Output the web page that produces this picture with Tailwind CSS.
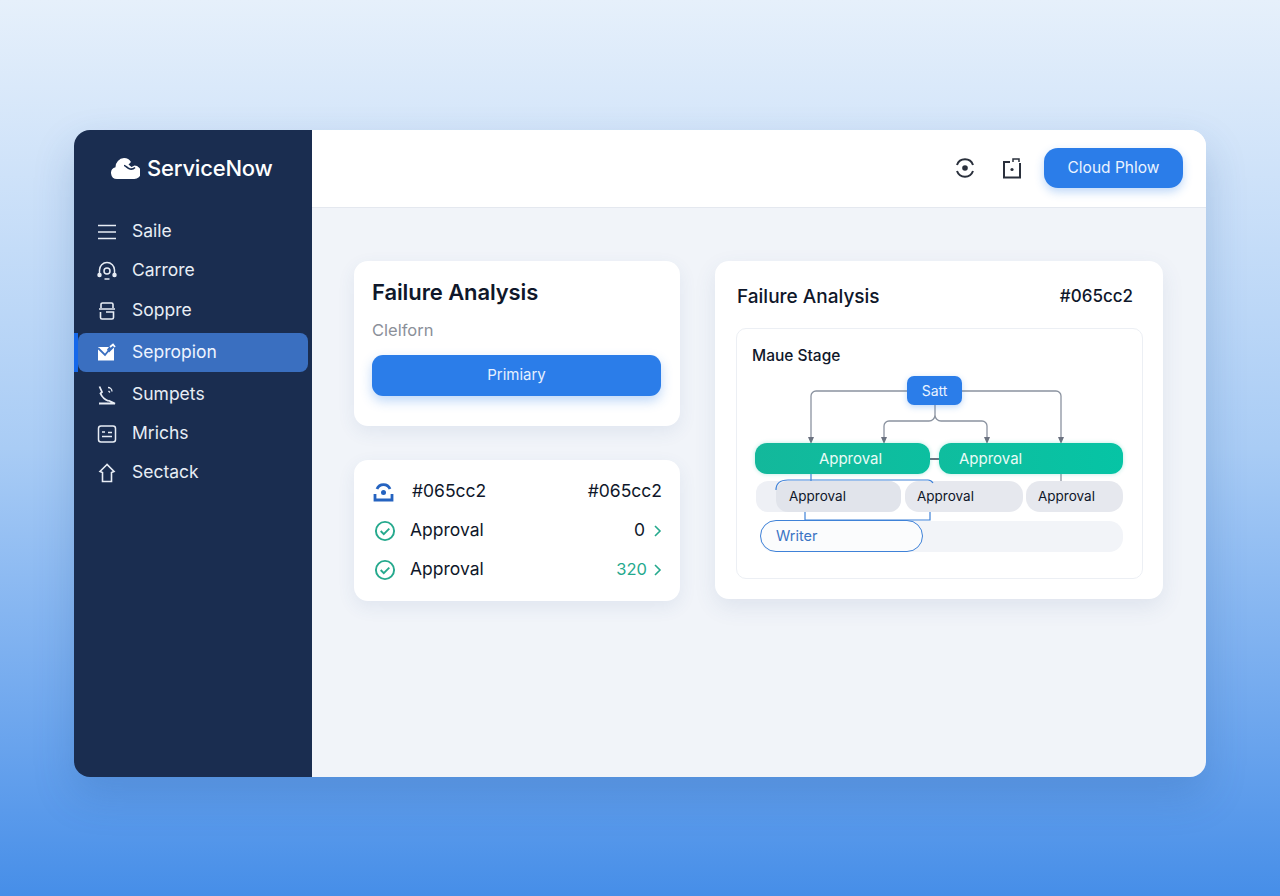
<!DOCTYPE html>
<html lang="en">

<head>
  <meta charset="UTF-8" />
  <meta name="viewport" content="width=device-width, initial-scale=1.0" />
  <title>ServiceNow</title>
  <script src="https://cdn.jsdelivr.net/npm/@tailwindcss/browser@4"></script>
</head>

<body class="h-[896px] overflow-hidden bg-gradient-to-b from-[#e6f0fb] via-[#a9ccf5] to-[#468ee8] pt-[130px] pl-[74px] font-['Inter',sans-serif] text-[#0f172a]">
  <div class="flex h-[647px] w-[1132px] overflow-hidden rounded-[16px] shadow-[0_18px_40px_rgba(30,80,150,0.22)]">

    <!-- Sidebar -->
    <aside class="w-[238px] shrink-0 bg-[#1a2d50] text-[#e8edf5]">
      <div class="flex h-[76px] items-center gap-[7px] pl-[36px]">
        <svg width="30" height="24" viewBox="0 0 30 24" fill="#fff">
          <path d="M7 23a6 6 0 0 1-1.500-11.800A9 9 0 0 1 14 2a8 8 0 0 1 7 4l-2.500 2.500 3 2.500 3-1.500A6 6 0 0 1 24 23z" />
          <path d="M14 9.500c2 0 3 3 6 3.500s4-.5 5-1.500" fill="none" stroke="#1a2d50" stroke-width="1.600" />
        </svg>
        <span class="text-[22px] font-medium tracking-[-0.2px] text-white">ServiceNow</span>
      </div>

      <nav class="mt-[6px] text-[17.500px]">
        <a class="flex h-[39px] items-center gap-[15px] pl-[23px]">
          <svg width="20" height="20" viewBox="0 0 20 20" fill="none" stroke="currentColor" stroke-width="1.600"><path d="M1 3.500h18M1 10h18M1 16.500h18" /></svg>
          <span>Saile</span>
        </a>
        <a class="flex h-[39px] items-center gap-[15px] pl-[23px]">
          <svg width="20" height="20" viewBox="0 0 20 20" fill="none" stroke="currentColor" stroke-width="1.500"><path d="M2.500 13V9a7.500 7.500 0 0 1 15 0v4" /><circle cx="10" cy="10" r="3" /><circle cx="2.500" cy="14" r="1.500" fill="currentColor" /><circle cx="17.500" cy="14" r="1.500" fill="currentColor" /><path d="M7.500 18h5" /></svg>
          <span>Carrore</span>
        </a>
        <a class="mt-[1px] flex h-[39px] items-center gap-[15px] pl-[23px]">
          <svg width="20" height="20" viewBox="0 0 20 20" fill="none" stroke="currentColor" stroke-width="1.600"><path d="M4 7V3.500a1.500 1.500 0 0 1 1.500-1.500h9A1.500 1.500 0 0 1 16 3.500V7M2 8h16M3.500 11v5.500A1.500 1.500 0 0 0 5 18h10a1.500 1.500 0 0 0 1.500-1.500V11H9" /></svg>
          <span>Soppre</span>
        </a>
        <a class="relative mt-[3px] ml-[4px] flex h-[39px] w-[230px] items-center gap-[15px] rounded-[8px] bg-[#3a6fc0] pl-[19px] text-[#eef4ff]">
          <span class="absolute top-0 -left-[4px] h-[39px] w-[4px] bg-[#1668ea]"></span>
          <svg width="20" height="20" viewBox="0 0 20 20"><path d="M1 4h11l-2 2.500 2 3 5-5v13H1z" fill="#fff" /><path d="M1 5l7 7 8-10" fill="none" stroke="#3a6fc0" stroke-width="1.800" /><path d="M13 4l3-2.500 2 2.500" fill="none" stroke="#fff" stroke-width="1.800" /></svg>
          <span>Sepropion</span>
        </a>
        <a class="mt-[3px] flex h-[39px] items-center gap-[15px] pl-[23px]">
          <svg width="20" height="20" viewBox="0 0 20 20" fill="none" stroke="currentColor" stroke-width="1.800"><path d="M2.500 1.500L5 7l-1.500 1.500c1.500 3.500 4 6 8 7.500M2 18.500h16l-6.500-3" /><path d="M11 2.500a4 4 0 0 1 4 4M11.500 6l1.500 1.500" stroke-width="1.300" /></svg>
          <span>Sumpets</span>
        </a>
        <a class="flex h-[39px] items-center gap-[15px] pl-[23px]">
          <svg width="20" height="20" viewBox="0 0 20 20" fill="none" stroke="currentColor" stroke-width="1.500"><rect x="1.500" y="2" width="17" height="16" rx="2.500" /><path d="M5 8h3M5 12.500h10M11 8.500h4" /></svg>
          <span>Mrichs</span>
        </a>
        <a class="flex h-[39px] items-center gap-[15px] pl-[23px]">
          <svg width="20" height="20" viewBox="0 0 20 20" fill="none" stroke="currentColor" stroke-width="1.600"><path d="M10 1.500L3 8.500l2.500 1V18.500h9V9.500l2.500-1z" /></svg>
          <span>Sectack</span>
        </a>
      </nav>
    </aside>

    <div class="flex min-w-0 flex-1 flex-col bg-[#f1f4f9]">
      <!-- Top bar -->
      <header class="flex h-[78px] shrink-0 items-center justify-end border-b border-[#e4e8ef] bg-white pr-[23px] pb-[2px]">
        <svg class="mr-[25px] ml-[2px]" width="22" height="22" viewBox="0 0 22 22" fill="none" stroke="#2a303c" stroke-width="2"><path d="M3 8a8.500 8.500 0 0 1 16 0M3 14a8.500 8.500 0 0 0 16 0" /><circle cx="11" cy="11" r="2.800" fill="#2a303c" stroke="none" /></svg>
        <svg class="mr-[21px]" width="22" height="22" viewBox="0 0 22 22" fill="none" stroke="#2a303c" stroke-width="2"><path d="M9 5H3v15.500h16V6" /><path d="M12 5V2h6v3" stroke-width="1.500" /><circle cx="11" cy="12.500" r="1.600" fill="#2a303c" stroke="none" /></svg>
        <button class="h-[40px] w-[139px] rounded-[14px] bg-[#2b7de9] text-[15.500px] text-[#eaf3ff] shadow-[0_4px_10px_rgba(43,125,233,0.3)]">Cloud Phlow</button>
      </header>

      <main class="flex items-start gap-[35px] pt-[53px] pl-[42px]">
        <div class="flex w-[326px] shrink-0 flex-col gap-[34px]">
          <!-- Failure analysis card -->
          <section class="h-[165px] rounded-[14px] bg-white px-[18px] pt-[16px] shadow-[0_6px_18px_rgba(60,90,140,0.09)]">
            <h2 class="text-[22px] leading-[30px] font-semibold tracking-[-0.1px]">Failure Analysis</h2>
            <p class="mt-[11px] text-[16.500px] leading-[24px] text-[#8b9099]">Clelforn</p>
            <button class="mt-[13px] h-[41px] w-[289px] rounded-[11px] bg-[#2b7de9] text-[15px] text-[#e6f0ff] shadow-[0_5px_12px_rgba(43,125,233,0.3)]">Primiary</button>
          </section>

          <!-- Status list -->
          <section class="h-[141px] rounded-[14px] bg-white px-[18px] pt-[12px] text-[17.500px] shadow-[0_6px_18px_rgba(60,90,140,0.09)]">
            <div class="flex h-[39px] items-center justify-between">
              <div class="flex items-center gap-[17px]">
                <svg width="23" height="22" viewBox="0 0 23 22" fill="none" stroke="#2563c0" stroke-width="2.800"><path d="M5 8a7 7 0 0 1 13 0" /><path d="M3 13v6h17v-6" /><circle cx="11.500" cy="11.500" r="2.500" fill="#2563c0" stroke="none" /></svg>
                <span>#065cc2</span>
              </div>
              <span>#065cc2</span>
            </div>
            <div class="flex h-[39px] items-center justify-between">
              <div class="flex items-center gap-[14px] pl-[2px]">
                <svg width="22" height="22" viewBox="0 0 23 23" fill="none" stroke="#25a98d" stroke-width="2"><circle cx="11.500" cy="11.500" r="9.500" /><path d="M7 11.500l3.200 3.200L16 9" /></svg>
                <span>Approval</span>
              </div>
              <div class="flex items-center gap-[8px]">
                <span>0</span>
                <svg width="9" height="14" viewBox="0 0 9 14" fill="none" stroke="#25a98d" stroke-width="1.600"><path d="M2 2l5 5-5 5" /></svg>
              </div>
            </div>
            <div class="flex h-[39px] items-center justify-between">
              <div class="flex items-center gap-[14px] pl-[2px]">
                <svg width="22" height="22" viewBox="0 0 23 23" fill="none" stroke="#25a98d" stroke-width="2"><circle cx="11.500" cy="11.500" r="9.500" /><path d="M7 11.500l3.200 3.200L16 9" /></svg>
                <span>Approval</span>
              </div>
              <div class="flex items-center gap-[6px] text-[#25a98d]">
                <span class="text-[16.500px]">320</span>
                <svg width="9" height="14" viewBox="0 0 9 14" fill="none" stroke="#25a98d" stroke-width="1.600"><path d="M2 2l5 5-5 5" /></svg>
              </div>
            </div>
          </section>
        </div>

        <!-- Flow card -->
        <section class="h-[338px] w-[448px] shrink-0 rounded-[14px] bg-white px-[21px] pt-[20px] shadow-[0_8px_22px_rgba(60,90,140,0.1)]">
          <div class="flex h-[32px] items-center justify-between pr-[9px] pl-[1px] text-[19px] font-medium">
            <h2>Failure Analysis</h2>
            <span class="text-[17px]">#065cc2</span>
          </div>
          <div class="relative mt-[15px] h-[251px] w-[407px] rounded-[10px] border border-[#eceff4] text-[14px]">
            <p class="absolute top-[15px] left-[15px] text-[15.500px] font-medium">Maue Stage</p>

            <svg class="absolute top-0 left-0" width="407" height="251" viewBox="0 0 407 251" fill="none">
              <path d="M171 62H79a5 5 0 0 0-5 5v43M225 62h94a5 5 0 0 1 5 5v43M198 76v10a6 6 0 0 1-6 6h-40a5 5 0 0 0-5 5v13M198 76v10a6 6 0 0 0 6 6h41a5 5 0 0 1 5 5v13" stroke="#8b93a0" stroke-width="1.300" />
              <path d="M71 108h6l-3 7zM144 108h6l-3 7zM247 108h6l-3 7zM321 108h6l-3 7z" fill="#6b7280" />
              <path d="M193 130h10" stroke="#6b7280" stroke-width="2" />
              <path d="M324 145v8" stroke="#8b93a0" stroke-width="1.300" />
            </svg>

            <div class="absolute top-[47px] left-[170px] flex h-[29px] w-[55px] items-center justify-center rounded-[7px] bg-[#2b7de9] text-[#eaf3ff] shadow-[0_2px_6px_rgba(43,125,233,0.3)]">Satt</div>

            <div class="absolute top-[114px] left-[18px] flex h-[31px] w-[175px] items-center justify-center rounded-[12px] bg-gradient-to-r from-[#13b89b] to-[#0cbfa0] pt-[1px] pl-[16px] text-[15px] text-[#e9fbf6] shadow-[0_0_4px_rgba(16,190,160,0.3)]">Approval</div>
            <div class="absolute top-[114px] left-[202px] flex h-[31px] w-[184px] items-center rounded-[12px] bg-gradient-to-r from-[#0fbd9e] to-[#06c4a5] pt-[1px] pl-[20px] text-[15px] text-[#e9fbf6] shadow-[0_0_4px_rgba(16,190,160,0.3)]">Approval</div>

            <div class="absolute top-[152px] left-[19px] h-[31px] w-[145px] rounded-[12px] bg-[#eef0f5]"></div>
            <div class="absolute top-[152px] left-[39px] flex h-[31px] w-[125px] items-center rounded-[12px] bg-[#e1e4eb] pl-[13px] text-[13.500px]">Approval</div>
            <div class="absolute top-[152px] left-[168px] flex h-[31px] w-[118px] items-center rounded-[14px] bg-[#e6e8ee] pl-[12px] text-[13.500px]">Approval</div>
            <div class="absolute top-[152px] left-[289px] flex h-[31px] w-[97px] items-center rounded-[14px] bg-[#e6e8ee] pl-[12px] text-[13.500px]">Approval</div>

            <div class="absolute top-[192px] left-[23px] h-[31px] w-[363px] rounded-[14px] bg-[#f2f4f8]"></div>
            <div class="absolute top-[191px] left-[23px] flex h-[32px] w-[163px] items-center rounded-[16px] border border-[#3f82d8] bg-white/70 pl-[15px] text-[14.500px] text-[#3a74c4]">Writer</div>

            <svg class="absolute top-0 left-0" width="407" height="251" viewBox="0 0 407 251" fill="none" stroke="#3f82d8" stroke-width="1.200">
              <path d="M74 145v7M39 161q0-10 12-10h140q3 0 5 3M68 183v8H193v-8" />
            </svg>
          </div>
        </section>
      </main>
    </div>
  </div>
</body>

</html>
